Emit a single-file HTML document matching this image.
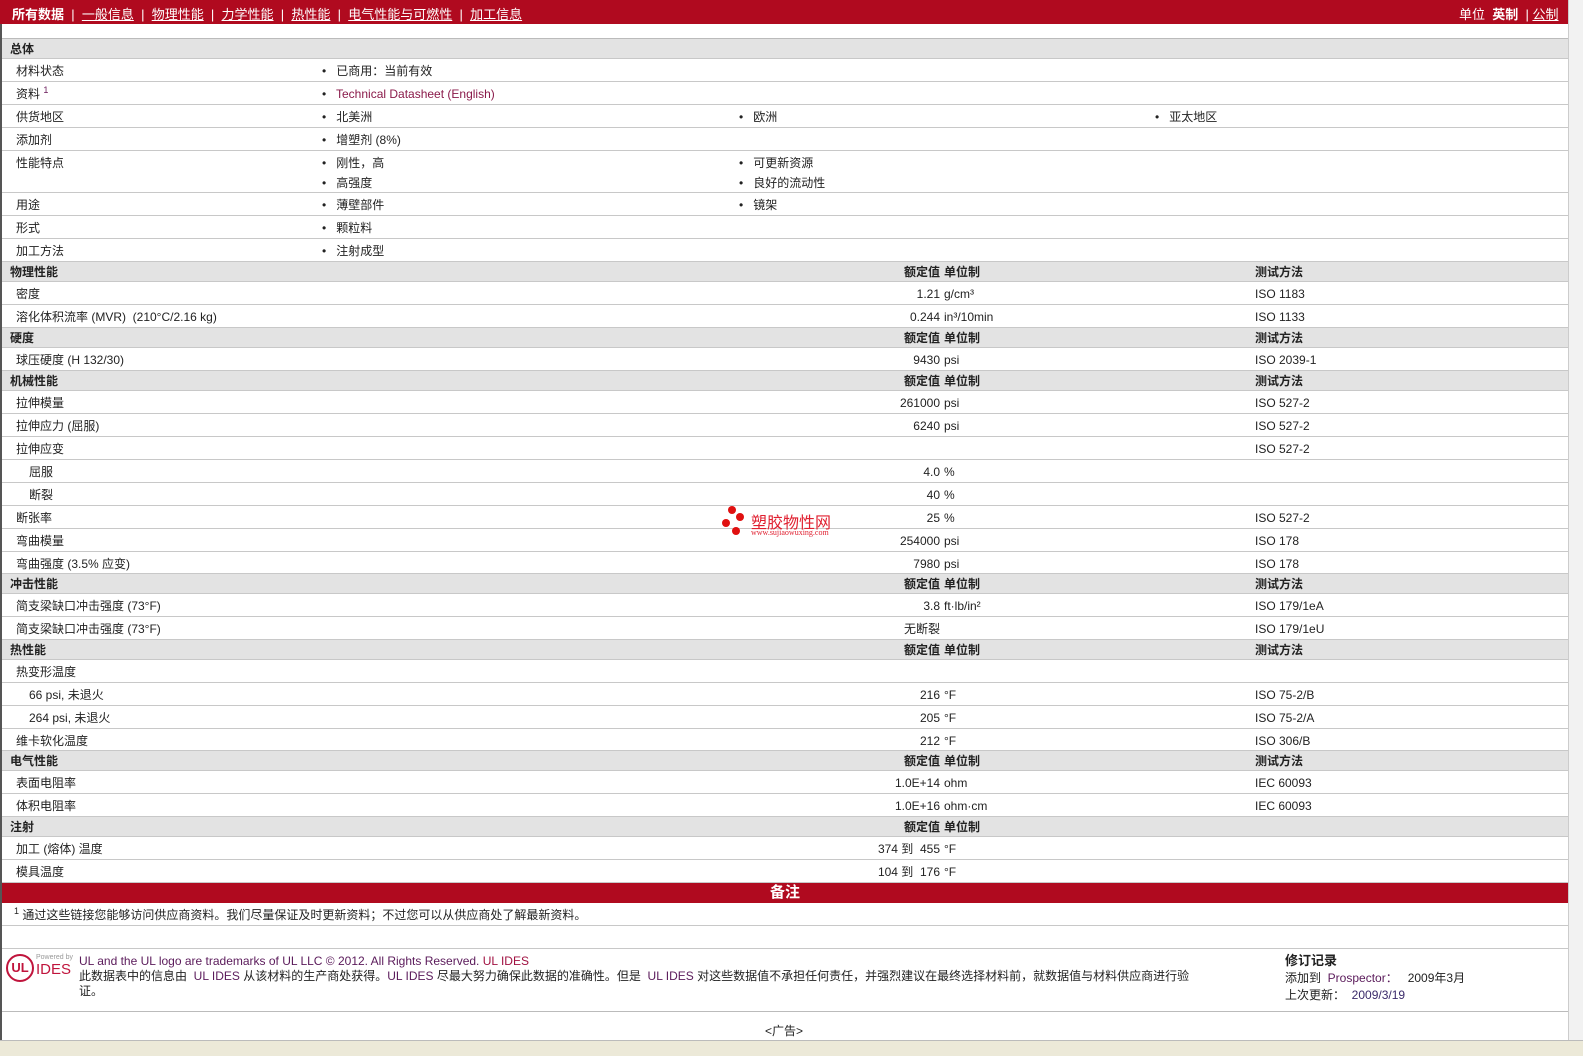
<!DOCTYPE html>
<html><head><meta charset="utf-8"><style>
*{margin:0;padding:0;box-sizing:border-box}
body{width:1583px;height:1056px;background:#fff;font-family:"Liberation Sans","Noto Sans CJK SC",sans-serif;font-size:12px;color:#222;position:relative;overflow:hidden}
#frame{position:absolute;left:0;top:0;width:1568px;height:1040px;border-left:2px solid #555;}
#right{position:absolute;left:1568px;top:0;width:15px;height:1056px;background:#f2f2f2;border-left:1px solid #ccc}
#bot{position:absolute;left:0;top:1040px;width:1583px;height:16px;background:#ece9d8;border-top:1px solid #bbb}
.top{position:absolute;left:0;top:0;width:1568px;height:24px;background:#b00a1f;color:#fff;font-size:13px}
.top a{color:#fff;text-decoration:underline}
.top span{position:absolute;top:4px;white-space:nowrap}
#rows{position:absolute;left:2px;top:38px;width:1566px;border-top:1px solid #bbb}
.r{position:relative;border-bottom:1px solid #c8c8c8;height:23px}
.r span{position:absolute;top:4px;white-space:nowrap;line-height:16px}
.r span span{position:static}
.r span span.sp{vertical-align:5px;font-size:9px;line-height:9px}
.g{background:#e3e3e3;height:20px;font-weight:bold}
.g span{top:2px}
.l{left:14px}.s{left:27px}
.b1{left:320px}.b2{left:737px}.b3{left:1153px}
.v{right:628px;text-align:right}
.u{left:942px}.t{left:1253px}
.red{background:#b00a1f;height:20px;color:#fff;font-weight:bold;font-size:15px;text-align:center;border:none;line-height:20px}
</style></head><body>
<div id="frame"></div>
<div class="top">
<span style="left:12px"><b>所有数据</b> &nbsp;|&nbsp; <a>一般信息</a> &nbsp;|&nbsp; <a>物理性能</a> &nbsp;|&nbsp; <a>力学性能</a> &nbsp;|&nbsp; <a>热性能</a> &nbsp;|&nbsp; <a>电气性能与可燃性</a> &nbsp;|&nbsp; <a>加工信息</a></span>
<span style="left:1459px">单位 &nbsp;<b>英制</b> &nbsp;| <a>公制</a></span>
</div>
<div id="rows">
<div class="r g"><span style="left:8px">总体</span></div>
<div class="r"><span class="l">材料状态</span><span class="b1">•&nbsp;&nbsp; 已商用：当前有效</span></div>
<div class="r"><span class="l">资料 <span class="sp" style="color:#6a1a5a">1</span></span><span class="b1">•&nbsp;&nbsp; <span style="color:#8a1a4a">Technical Datasheet (English)</span></span></div>
<div class="r"><span class="l">供货地区</span><span class="b1">•&nbsp;&nbsp; 北美洲</span><span class="b2">•&nbsp;&nbsp; 欧洲</span><span class="b3">•&nbsp;&nbsp; 亚太地区</span></div>
<div class="r"><span class="l">添加剂</span><span class="b1">•&nbsp;&nbsp; 增塑剂 (8%)</span></div>
<div class="r" style="height:42px"><span class="l">性能特点</span><span class="b1">•&nbsp;&nbsp; 刚性，高</span><span class="b2">•&nbsp;&nbsp; 可更新资源</span><span class="b1" style="top:24px">•&nbsp;&nbsp; 高强度</span><span class="b2" style="top:24px">•&nbsp;&nbsp; 良好的流动性</span></div>
<div class="r"><span class="l">用途</span><span class="b1">•&nbsp;&nbsp; 薄壁部件</span><span class="b2">•&nbsp;&nbsp; 镜架</span></div>
<div class="r"><span class="l">形式</span><span class="b1">•&nbsp;&nbsp; 颗粒料</span></div>
<div class="r"><span class="l">加工方法</span><span class="b1">•&nbsp;&nbsp; 注射成型</span></div>
<div class="r g"><span style="left:8px">物理性能</span><span class="v">额定值</span><span class="u">单位制</span><span class="t">测试方法</span></div>
<div class="r"><span class="l">密度</span><span class="v">1.21</span><span class="u">g/cm³</span><span class="t">ISO 1183</span></div>
<div class="r"><span class="l">溶化体积流率 (MVR) &nbsp;(210°C/2.16 kg)</span><span class="v">0.244</span><span class="u">in³/10min</span><span class="t">ISO 1133</span></div>
<div class="r g"><span style="left:8px">硬度</span><span class="v">额定值</span><span class="u">单位制</span><span class="t">测试方法</span></div>
<div class="r"><span class="l">球压硬度 (H 132/30)</span><span class="v">9430</span><span class="u">psi</span><span class="t">ISO 2039-1</span></div>
<div class="r g"><span style="left:8px">机械性能</span><span class="v">额定值</span><span class="u">单位制</span><span class="t">测试方法</span></div>
<div class="r"><span class="l">拉伸模量</span><span class="v">261000</span><span class="u">psi</span><span class="t">ISO 527-2</span></div>
<div class="r"><span class="l">拉伸应力 (屈服)</span><span class="v">6240</span><span class="u">psi</span><span class="t">ISO 527-2</span></div>
<div class="r"><span class="l">拉伸应变</span><span class="t">ISO 527-2</span></div>
<div class="r"><span class="s">屈服</span><span class="v">4.0</span><span class="u">%</span></div>
<div class="r"><span class="s">断裂</span><span class="v">40</span><span class="u">%</span></div>
<div class="r"><span class="l">断张率</span><span class="v">25</span><span class="u">%</span><span class="t">ISO 527-2</span></div>
<div class="r"><span class="l">弯曲模量</span><span class="v">254000</span><span class="u">psi</span><span class="t">ISO 178</span></div>
<div class="r" style="height:22px"><span class="l">弯曲强度 (3.5% 应变)</span><span class="v">7980</span><span class="u">psi</span><span class="t">ISO 178</span></div>
<div class="r g"><span style="left:8px">冲击性能</span><span class="v">额定值</span><span class="u">单位制</span><span class="t">测试方法</span></div>
<div class="r"><span class="l">简支梁缺口冲击强度 (73°F)</span><span class="v">3.8</span><span class="u">ft·lb/in²</span><span class="t">ISO 179/1eA</span></div>
<div class="r"><span class="l">简支梁缺口冲击强度 (73°F)</span><span class="v">无断裂</span><span class="t">ISO 179/1eU</span></div>
<div class="r g"><span style="left:8px">热性能</span><span class="v">额定值</span><span class="u">单位制</span><span class="t">测试方法</span></div>
<div class="r"><span class="l">热变形温度</span></div>
<div class="r"><span class="s">66 psi, 未退火</span><span class="v">216</span><span class="u">°F</span><span class="t">ISO 75-2/B</span></div>
<div class="r"><span class="s">264 psi, 未退火</span><span class="v">205</span><span class="u">°F</span><span class="t">ISO 75-2/A</span></div>
<div class="r" style="height:22px"><span class="l">维卡软化温度</span><span class="v">212</span><span class="u">°F</span><span class="t">ISO 306/B</span></div>
<div class="r g"><span style="left:8px">电气性能</span><span class="v">额定值</span><span class="u">单位制</span><span class="t">测试方法</span></div>
<div class="r"><span class="l">表面电阻率</span><span class="v">1.0E+14</span><span class="u">ohm</span><span class="t">IEC 60093</span></div>
<div class="r"><span class="l">体积电阻率</span><span class="v">1.0E+16</span><span class="u">ohm·cm</span><span class="t">IEC 60093</span></div>
<div class="r g"><span style="left:8px">注射</span><span class="v">额定值</span><span class="u">单位制</span></div>
<div class="r"><span class="l">加工 (熔体) 温度</span><span class="v">374 到 &nbsp;455</span><span class="u">°F</span></div>
<div class="r"><span class="l">模具温度</span><span class="v">104 到 &nbsp;176</span><span class="u">°F</span></div>
<div class="r red">备注</div>
<div class="r"><span style="left:12px"><span class="sp">1</span> 通过这些链接您能够访问供应商资料。我们尽量保证及时更新资料；不过您可以从供应商处了解最新资料。</span></div>
<div class="r"></div>
</div>
<div style="position:absolute;left:722px;top:505px;width:130px;height:36px">
<div style="position:absolute;left:6px;top:1px;width:8px;height:8px;border-radius:50%;background:#e01010"></div>
<div style="position:absolute;left:14px;top:8px;width:8px;height:8px;border-radius:50%;background:#e01010"></div>
<div style="position:absolute;left:0;top:14px;width:8px;height:8px;border-radius:50%;background:#e01010"></div>
<div style="position:absolute;left:10px;top:22px;width:8px;height:8px;border-radius:50%;background:#e01010"></div>
<div style="position:absolute;left:29px;top:4px;color:#e02030;font-size:16px;white-space:nowrap">塑胶物性网</div>
<div style="position:absolute;left:29px;top:23px;color:#e02030;font-size:8px;font-family:'Liberation Serif',serif;white-space:nowrap">www.sujiaowuxing.com</div>
</div>
<div style="position:absolute;left:6px;top:954px;width:28px;height:28px;border:2px solid #c0143c;border-radius:50%;color:#c0143c;font-weight:bold;font-size:13px;text-align:center;line-height:24px">UL</div>
<div style="position:absolute;left:36px;top:954px;color:#999;font-size:7px">Powered by</div>
<div style="position:absolute;left:36px;top:961px;color:#c0143c;font-size:15px">IDES</div>
<div style="position:absolute;left:79px;top:954px;line-height:15px;width:1200px;white-space:nowrap">
<span style="color:#5a1a5a">UL and the UL logo are trademarks of UL LLC © 2012. All Rights Reserved. </span><span style="color:#a01040">UL IDES</span><br>
此数据表中的信息由 &nbsp;<span style="color:#5a1a5a">UL IDES</span> 从该材料的生产商处获得。<span style="color:#5a1a5a">UL IDES</span> 尽最大努力确保此数据的准确性。但是 &nbsp;<span style="color:#5a1a5a">UL IDES</span> 对这些数据值不承担任何责任，并强烈建议在最终选择材料前，就数据值与材料供应商进行验<br>证。
</div>
<div style="position:absolute;left:1285px;top:952px;line-height:17px">
<b style="font-size:13px">修订记录</b><br>添加到 &nbsp;<span style="color:#5a1a5a">Prospector：</span> &nbsp; 2009年3月<br>上次更新： &nbsp;<span style="color:#3a2a6a">2009/3/19</span></div>
<div style="position:absolute;left:2px;top:1011px;width:1566px;border-top:1px solid #bbb"></div>
<div style="position:absolute;left:0;top:1022px;width:1568px;text-align:center">&lt;广告&gt;</div>
<div id="right"></div>
<div id="bot"></div>
</body></html>
